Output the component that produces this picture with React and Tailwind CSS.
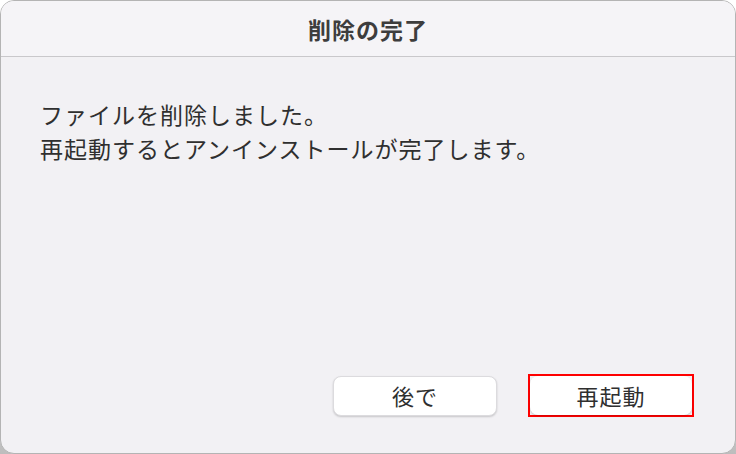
import React from 'react';

const font = { fontFamily: '"Noto Sans CJK JP", "Noto Sans", sans-serif' };

export default function App() {
  return (
    <div
      className="w-[736px] h-[454px] bg-gradient-to-b from-white via-white to-[#bdbdbd]"
      style={font}
    >
      <div className="w-full h-full flex flex-col bg-[#f2f1f4] border border-[#b4b4b4] rounded-[14px] overflow-hidden">
        {/* Title bar */}
        <div className="h-[56px] shrink-0 flex items-center justify-center bg-[#f5f4f7] border-b border-[#c9c8cb]">
          <h1 className="text-[23px] font-bold text-[#3d3d3d] tracking-[1px] pt-[1px]">削除の完了</h1>
        </div>

        {/* Message */}
        <div className="flex-1 px-[39px] pt-[40px] text-[23px] leading-[34px] text-[#2f2f2f] tracking-[1px]">
          <p>ファイルを削除しました。</p>
          <p>再起動するとアンインストールが完了します。</p>
        </div>

        {/* Buttons */}
        <div className="flex justify-end items-center gap-[31px] pr-[41px] pb-[36px]">
          <button className="w-[164px] h-[40px] bg-white rounded-[8px] border border-[#dcdbde] shadow-[0_1px_2px_rgba(0,0,0,0.18)] text-[22px] text-[#2f2f2f] tracking-[1px] flex items-center justify-center">
            後で
          </button>
          <div className="border-2 border-[#ff0000]">
            <button className="w-[162px] h-[39px] bg-white rounded-[8px] shadow-[0_1px_2px_rgba(0,0,0,0.18)] text-[22px] text-[#2f2f2f] tracking-[1px] flex items-center justify-center">
              再起動
            </button>
          </div>
        </div>
      </div>
    </div>
  );
}
